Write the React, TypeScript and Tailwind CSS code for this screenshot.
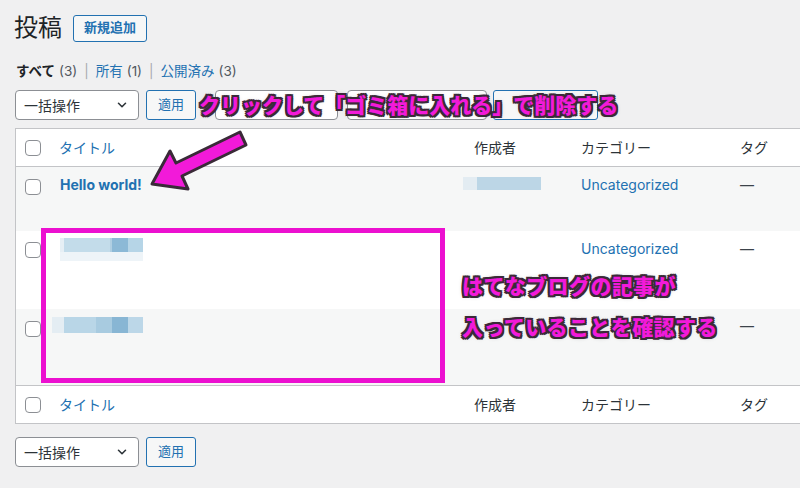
import React from "react";

const ANN =
  "font-['Noto_Sans_CJK_JP',sans-serif] font-black text-[#f21ad9] whitespace-nowrap [text-shadow:2px_0_0_#3a2a38,-2px_0_0_#3a2a38,0_2px_0_#3a2a38,0_-2px_0_#3a2a38,2px_2px_0_#3a2a38,-2px_-2px_0_#3a2a38,2px_-2px_0_#3a2a38,-2px_2px_0_#3a2a38,0_0_5px_rgba(0,0,0,0.35)]";

function Checkbox() {
  return <div className="w-[16px] h-[16px] rounded-[4px] border border-[#8c8f94] bg-white" />;
}

function Chevron() {
  return (
    <svg width="14" height="14" viewBox="0 0 16 16" fill="none">
      <path d="M4 6l4 4 4-4" stroke="#2c3338" strokeWidth="1.8" strokeLinecap="round" strokeLinejoin="round" />
    </svg>
  );
}

function Select({ label, w }: { label: string; w: string }) {
  return (
    <div className={`${w} h-[30px] bg-white border border-[#8c8f94] rounded-[4px] flex items-center justify-between pl-[8px] pr-[9px] text-[14px] text-[#2c3338]`}>
      <span>{label}</span>
      <Chevron />
    </div>
  );
}

function Btn({ label, w }: { label: string; w: string }) {
  return (
    <div className={`${w} h-[30px] bg-[#f6f7f7] border border-[#2271b1] rounded-[3px] flex items-center justify-center text-[13px] text-[#2271b1]`}>
      {label}
    </div>
  );
}

function Dash() {
  return <span className="text-[#3c434a] text-[14px]">—</span>;
}

export default function App() {
  return (
    <div className="relative w-[800px] h-[488px] overflow-hidden bg-[#f0f0f1] font-['Inter','Noto_Sans_CJK_JP',sans-serif] text-[#1d2327]">
      <div className="pl-[14px] pt-[14px]">
        <div className="flex items-center h-[28px] gap-[11px]">
          <h1 className="text-[24px] leading-[28px] font-normal text-[#1d2327]">投稿</h1>
          <div className="h-[27px] w-[74px] border border-[#2271b1] rounded-[3px] bg-[#f6f7f7] flex items-center justify-center text-[13px] font-semibold text-[#2271b1]">
            新規追加
          </div>
        </div>
        <div className="mt-[19px] h-[20px] flex items-center text-[13.5px] pl-[2px]">
          <span className="font-semibold text-[#1d2327]">すべて</span>
          <span className="text-[#50575e] ml-[4px]">(3)</span>
          <span className="text-[#a7aaad] mx-[7px]">|</span>
          <span className="text-[#2271b1]">所有</span>
          <span className="text-[#50575e] ml-[4px]">(1)</span>
          <span className="text-[#a7aaad] mx-[7px]">|</span>
          <span className="text-[#2271b1]">公開済み</span>
          <span className="text-[#50575e] ml-[4px]">(3)</span>
        </div>
      </div>

      <div className="pl-[15px] mt-[9px] flex items-center">
        <Select label="一括操作" w="w-[124px]" />
        <div className="ml-[7px]"><Btn label="適用" w="w-[50px]" /></div>
        <div className="ml-[19px] w-[123px] h-[30px] bg-white border border-[#8c8f94] rounded-[4px]" />
        <div className="ml-[9px] w-[140px] h-[30px] bg-white border border-[#8c8f94] rounded-[4px]" />
        <div className="ml-[6px]"><Btn label="絞り込み" w="w-[105px]" /></div>
      </div>

      <div className="ml-[15px] mt-[8px] border-l border-t border-b border-[#c3c4c7] bg-white text-[14px]">
        <div className="grid grid-cols-[43px_407px_107px_159px_1fr] h-[38px] items-center border-b border-[#c3c4c7]">
          <div className="pl-[9px]"><Checkbox /></div>
          <div className="text-[#2271b1]">タイトル</div>
          <div className="pl-[8px] text-[#2c3338]">作成者</div>
          <div className="pl-[8px] text-[#2c3338]">カテゴリー</div>
          <div className="pl-[8px] text-[#2c3338]">タグ</div>
        </div>

        <div className="grid grid-cols-[43px_407px_107px_159px_1fr] h-[64px] items-start bg-[#f6f7f7] leading-[20px]">
          <div className="pl-[9px] pt-[12px]"><Checkbox /></div>
          <div className="pt-[8px] font-bold text-[#2271b1] pl-[1px]">Hello world!</div>
          <div className="pt-[10px] flex ml-[-3px]">
            <div className="w-[14px] h-[13px] bg-[#e3ecf2]" />
            <div className="w-[64px] h-[13px] bg-[#bcd6e6]" />
          </div>
          <div className="pt-[8px] pl-[8px] text-[#2271b1]">Uncategorized</div>
          <div className="pt-[8px] pl-[8px]"><Dash /></div>
        </div>

        <div className="grid grid-cols-[43px_407px_107px_159px_1fr] h-[78px] items-start bg-white leading-[20px]">
          <div className="pl-[9px] pt-[11px]"><Checkbox /></div>
          <div className="pt-[7px] pl-[1px]">
            <div className="flex">
              <div className="w-[4px] h-[14px] bg-[#e6eff5]" />
              <div className="w-[46px] h-[14px] bg-[#c3dcea]" />
              <div className="w-[2px] h-[14px] bg-[#b0cfe2]" />
              <div className="w-[16px] h-[14px] bg-[#8cb9d6]" />
              <div className="w-[15px] h-[14px] bg-[#b6d5e7]" />
            </div>
            <div className="w-[83px] h-[9px] bg-[#eef4f8]" />
          </div>
          <div />
          <div className="pt-[8px] pl-[8px] text-[#2271b1]">Uncategorized</div>
          <div className="pt-[8px] pl-[8px]"><Dash /></div>
        </div>

        <div className="grid grid-cols-[43px_407px_107px_159px_1fr] h-[76px] items-start bg-[#f6f7f7] leading-[20px]">
          <div className="pl-[9px] pt-[12px]"><Checkbox /></div>
          <div className="pt-[8px] ml-[-7px]">
            <div className="flex">
              <div className="w-[12px] h-[16px] bg-[#e4edf3]" />
              <div className="w-[32px] h-[16px] bg-[#b9d6e7]" />
              <div className="w-[16px] h-[16px] bg-[#a8cbe0]" />
              <div className="w-[16px] h-[16px] bg-[#88b6d4]" />
              <div className="w-[15px] h-[16px] bg-[#bcd7e8]" />
            </div>
          </div>
          <div />
          <div />
          <div className="pt-[7px] pl-[8px]"><Dash /></div>
        </div>

        <div className="grid grid-cols-[43px_407px_107px_159px_1fr] h-[38px] items-center border-t border-[#c3c4c7]">
          <div className="pl-[9px]"><Checkbox /></div>
          <div className="text-[#2271b1]">タイトル</div>
          <div className="pl-[8px] text-[#2c3338]">作成者</div>
          <div className="pl-[8px] text-[#2c3338]">カテゴリー</div>
          <div className="pl-[8px] text-[#2c3338]">タグ</div>
        </div>
      </div>

      <div className="pl-[15px] mt-[13px] flex items-center">
        <Select label="一括操作" w="w-[124px]" />
        <div className="ml-[7px]"><Btn label="適用" w="w-[50px]" /></div>
      </div>

      {/* annotations */}
      <div className={`absolute left-[199px] top-[91px] text-[21px] leading-[26px] ${ANN}`}>
        クリックして「ゴミ箱に入れる」で削除する
      </div>

      <div className="absolute left-[41px] top-[228px] w-[404px] h-[155px] border-[5px] border-[#ec10d0]" />

      <div className={`absolute left-[462px] top-[265px] text-[21px] leading-[41px] tracking-[0.4px] ${ANN}`}>
        <div>はてなブログの記事が</div>
        <div>入っていることを確認する</div>
      </div>

      <svg className="absolute left-0 top-0" width="800" height="488" viewBox="0 0 800 488">
        <polygon
          points="152,184 188,189 182,176 246,145 240,132 176,163 170,151"
          fill="#f21ad9"
          stroke="#3a2a38"
          strokeWidth="3"
          strokeLinejoin="round"
        />
      </svg>
    </div>
  );
}
